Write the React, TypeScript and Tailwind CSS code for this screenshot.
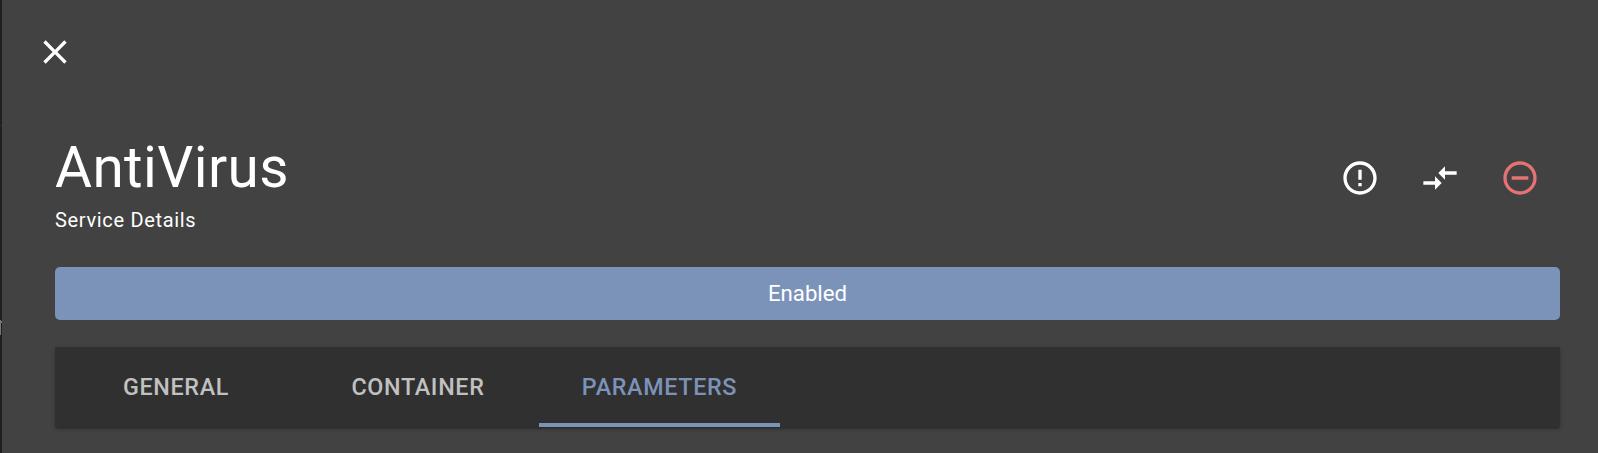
import React from "react";

const AlertIcon = () => (
  <svg viewBox="0 0 24 24" className="size-10 fill-white"><path d="M11 15h2v2h-2zm0-8h2v6h-2zm.99-5C6.47 2 2 6.48 2 12s4.47 10 9.99 10C17.52 22 22 17.52 22 12S17.52 2 11.99 2zM12 20c-4.42 0-8-3.58-8-8s3.58-8 8-8 8 3.58 8 8-3.58 8-8 8z" /></svg>
);
const CompareIcon = () => (
  <svg viewBox="0 0 24 24" className="size-10 fill-white"><path d="M9.01 14H2v2h7.01v3L13 15l-3.99-4v3zm5.98-1v-3H22V8h-7.01V5L11 9l3.99 4z" /></svg>
);
const RemoveIcon = () => (
  <svg viewBox="0 0 24 24" className="size-10 fill-[#e57373]"><path d="M7 11v2h10v-2H7zm5-9C6.48 2 2 6.48 2 12s4.48 10 10 10 10-4.48 10-10S17.52 2 12 2zm0 18c-4.41 0-8-3.59-8-8s3.59-8 8-8 8 3.59 8 8-3.59 8-8 8z" /></svg>
);
const CloseIcon = () => (
  <svg viewBox="0 0 24 24" className="size-10 fill-white"><path d="M19 6.41 17.59 5 12 10.59 6.41 5 5 6.41 10.59 12 5 17.59 6.41 19 12 13.41 17.59 19 19 17.59 13.41 12z" /></svg>
);

export default function App() {
  return (
    <div className="relative flex h-[453px] w-[1598px] overflow-hidden bg-[#424242] font-['Roboto',sans-serif] text-white">
      <aside className="w-0.5 shrink-0 bg-[#1f1f1f]">
        <span className="absolute top-[125px] left-0 h-px w-0.5 bg-[#2d2d2d]" />
        <span className="absolute top-[320px] left-0 h-[15px] w-px bg-[#777777]" />
        <span className="absolute top-[321px] left-px h-[2px] w-px bg-[#777777]" />
      </aside>
      <main className="flex-1 pr-[38px] pl-[53px]">
        <button className="mt-8 -ml-5 block"><CloseIcon /></button>
        <header className="mt-[62px] flex h-[98px] justify-between">
          <div>
            <h1 className="pt-px text-[56.7px] leading-[66px] tracking-[0.417px]">AntiVirus</h1>
            <p className="mt-[6px] text-[20px] leading-[26px] tracking-[0.67px]">Service Details</p>
          </div>
          <div className="mt-6 mr-5 flex h-10 gap-10"><AlertIcon /><CompareIcon /><RemoveIcon /></div>
        </header>
        <div className="mt-[35px] flex h-[53px] items-center justify-center rounded-[5px] bg-[#7c93b9] text-[22.2px]">Enabled</div>
        <nav className="mt-[27px] flex h-20 bg-[#303030] text-[23.3px] font-medium tracking-[0.67px] text-[#c1c1c1] shadow-[0_3px_2px_-2px_rgba(0,0,0,0.2),0_2px_2px_rgba(0,0,0,0.14),0_2px_5px_rgba(0,0,0,0.12)]">
          <button className="w-[242px]">GENERAL</button>
          <button className="w-[242px]">CONTAINER</button>
          <button className="w-[241px] border-b-4 border-[#7c93b9] pt-1 text-[#7c93b9]">PARAMETERS</button>
        </nav>
      </main>
    </div>
  );
}
